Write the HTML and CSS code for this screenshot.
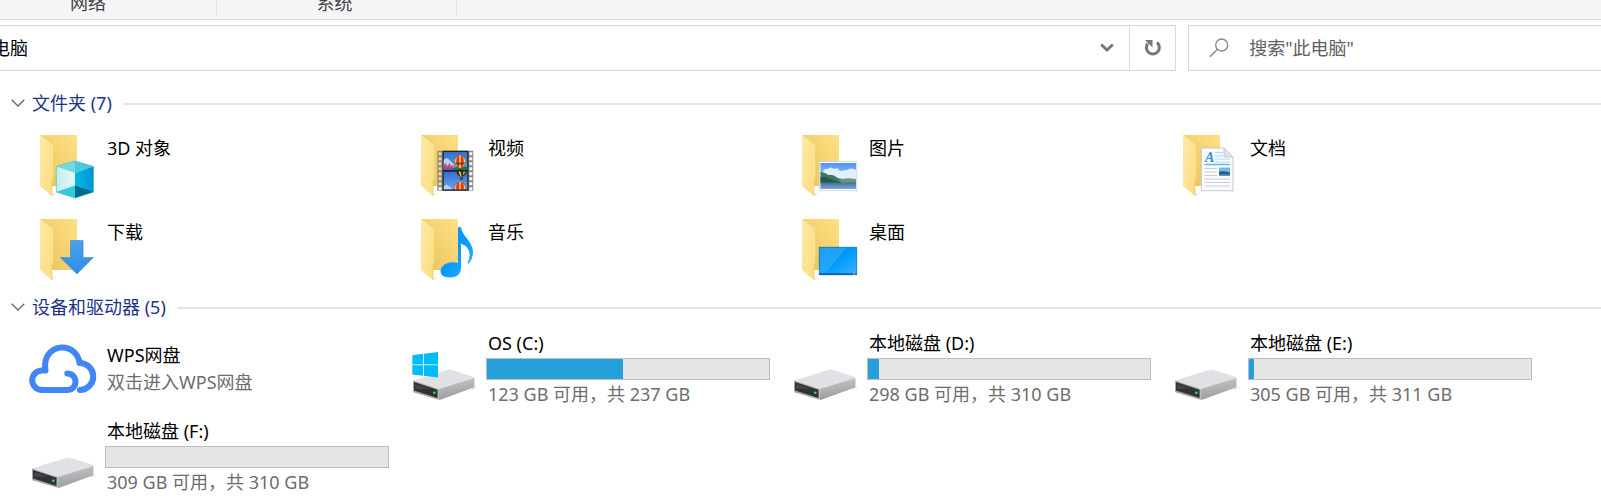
FILE: index.html
```html
<!DOCTYPE html>
<html lang="zh-CN">
<head>
<meta charset="utf-8">
<meta name="viewport" content="width=device-width, initial-scale=1">
<title>此电脑</title>
<link rel="stylesheet" href="styles.css">
</head>
<body>
<svg class="defs" aria-hidden="true">
  <defs>
    <linearGradient id="g-back" x1="0" x2="1" y1="1" y2="0"><stop offset="0" stop-color="#e6c25c"/><stop offset="1" stop-color="#ffe083"/></linearGradient>
    <linearGradient id="g-flap" x1="0" x2="1" y1="0" y2="1"><stop offset="0" stop-color="#ffe9a6"/><stop offset="1" stop-color="#fbdc7c"/></linearGradient>
    <linearGradient id="g-shade"><stop offset="0" stop-color="#9a9a9a" stop-opacity=".3"/><stop offset="1" stop-color="#9a9a9a" stop-opacity="0"/></linearGradient>
    <linearGradient id="g-side" x1="0" x2="0.2" y1="0" y2="1"><stop offset="0" stop-color="#c9cacc"/><stop offset="1" stop-color="#9b9c9e"/></linearGradient>
    <linearGradient id="g-blue" x1="0" x2="1" y1="0" y2="1"><stop offset="0" stop-color="#0090f5"/><stop offset=".5" stop-color="#009bff"/><stop offset="1" stop-color="#3db2ff"/></linearGradient>
    <linearGradient id="g-sky" x1="0" x2="0" y1="0" y2="1"><stop offset="0" stop-color="#4f95f0"/><stop offset="1" stop-color="#d8ecfb"/></linearGradient>
    <linearGradient id="g-lake" x1="0" x2="0" y1="0" y2="1"><stop offset="0" stop-color="#3a6f9e"/><stop offset="1" stop-color="#7fa9c9"/></linearGradient>
    <linearGradient id="g-arrow" x1="0" x2="0" y1="0" y2="1"><stop offset="0" stop-color="#4ba0ea"/><stop offset="1" stop-color="#2b8fe8"/></linearGradient>
    <linearGradient id="g-film" x1="0" x2="0" y1="0" y2="1"><stop offset="0" stop-color="#2f6fd0"/><stop offset="1" stop-color="#6ba4ee"/></linearGradient>
    <linearGradient id="g-cl"><stop offset="0" stop-color="#c3ecec"/><stop offset="1" stop-color="#e6f8fa"/></linearGradient>
    <linearGradient id="g-cr"><stop offset="0" stop-color="#00bddc"/><stop offset="1" stop-color="#0091da"/></linearGradient>
  </defs>
  <symbol id="folder" viewBox="0 0 72 66">
    <path d="M26 60l5-1-5 3zM60 56l10-1-8 4z" fill="url(#g-shade)"/>
    <path d="M14 1h37v51H26z" fill="url(#g-back)"/>
    <path d="M14 1l13.700 10.500V44L26 46v16L14 52z" fill="url(#g-flap)"/>
    <path d="M27.700 11.500V44L26 46v16" fill="none" stroke="#edcb6b" stroke-width=".7"/>
  </symbol>
  <symbol id="drive" viewBox="0 0 72 66">
    <path d="M66 50l6 1-7 3z" fill="url(#g-shade)"/>
    <path d="M6 44.500L40 34q2.500-1 5 0l20.500 6.500q2 .7 2 2L31.500 53z" fill="#e0e1e5"/>
    <path d="M31.500 53l36-11v8q0 1.500-2 2L34 63.500q-1.500.5-2.500.2z" fill="url(#g-side)"/>
    <path d="M6 44.500L31.500 53v10.700L7 56.500q-1-.4-1-1.500z" fill="#a6a7a9"/>
    <path d="M7 46l23.500 7.800v8.200L7 54.500z" fill="#303234"/>
    <path d="M8 48l15 4.500L8 53z" fill="#434547"/>
    <circle cx="27.300" cy="56.700" r="1.300" fill="#2bea3c"/>
  </symbol>
  <symbol id="scene" viewBox="0 0 24 19">
    <rect width="24" height="19" fill="url(#g-film)"/>
    <path d="M0 8l3-2 3 2 4 4 1 5H0z" fill="#bcd2f5"/>
    <path d="M0 13l2-2 2 3 2-3 2 3 2-1v6H0z" fill="#d44a7c"/>
    <path d="M0 15l3 1 3-1 3 2v2H0z" fill="#7058b8"/>
    <path d="M9 16q7-3 15-1v4H9z" fill="#167a50"/>
    <path d="M11 9a5.500 5.500 0 0 1 11 0q0 3-4 7h-3q-4-4-4-7z" fill="#e8352c"/>
    <path d="M13.500 4.800q-2 5 1 11l-2.500-3.800q-2-4 1.500-7.200zM19.500 4.800q2 5-1 11l2.500-3.800q2-4-1.500-7.200zM15.700 3.500h1.600V16h-1.600z" fill="#f7d730"/>
    <path d="M11.500 10.500h10l-1 2h-8z" fill="#352b2b" opacity=".65"/>
    <path d="M15 17h3v2h-3z" fill="#5d3420"/>
  </symbol>
  <symbol id="chevron" viewBox="0 0 14 8"><path d="M.7.700L7 7l6.300-6.300" fill="none" stroke="#666" stroke-width="1.300"/></symbol>
</svg>

<header class="ribbon">
  <span class="ribbon-group">网络</span>
  <span class="ribbon-group">系统</span>
</header>

<div class="toolbar">
  <div class="address">
    <input class="address-input" type="text" value="电脑" aria-label="地址">
    <button class="history" type="button" aria-label="以前的位置">
      <svg width="14" height="10" viewBox="0 0 14 10"><path d="M1.200 1.500L7 7l5.800-5.500" fill="none" stroke="#777" stroke-width="3"/></svg>
    </button>
    <button class="refresh" type="button" aria-label="刷新">
      <svg width="18" height="18" viewBox="0 0 18 18"><path d="M13 3.500A6.500 6.500 0 1 1 3.700 4.500" fill="none" stroke="#777" stroke-width="3"/><path d="M1 1h7.500v7.500z" fill="#777"/></svg>
    </button>
  </div>
  <label class="search">
    <svg width="20" height="20" viewBox="0 0 20 20"><circle cx="12.700" cy="7" r="6" fill="none" stroke="#888" stroke-width="1.300"/><path d="M8.400 11.300L1 18.700" stroke="#888" stroke-width="1.400"/></svg>
    <input class="search-input" type="text" placeholder='搜索"此电脑"' aria-label="搜索">
  </label>
</div>

<main class="content">
  <section>
    <h2 class="group-title"><button type="button"><svg width="14" height="8"><use href="#chevron"/></svg>文件夹 (7)</button></h2>
    <div class="tiles folders">
      <a class="tile" href="#objects">
        <svg class="icon" viewBox="0 0 72 66"><use href="#folder"/>
          <path d="M30.300 32.500L49 27l18.500 5.500L49 39z" fill="#6fd8e9"/><path d="M49 27l18.500 5.500L49 39z" fill="#4cc7de"/>
          <path d="M30.300 32.500L49 39v25l-18.700-6z" fill="url(#g-cl)"/><path d="M67.500 32.500L49 39v25l18.500-6z" fill="url(#g-cr)"/>
          <path d="M30.300 58L49 51.500V64z" fill="#2fcbdd"/><path d="M67.500 58L49 51.500V64z" fill="#00698c"/>
          <path d="M30.300 32.500L49 27l18.500 5.500V58L49 64l-18.700-6z" fill="none" stroke="#35b5cd" stroke-width=".6"/></svg>
        <span class="name">3D 对象</span>
      </a>
      <a class="tile" href="#videos">
        <svg class="icon" viewBox="0 0 72 66"><use href="#folder"/>
          <path d="M30.300 16.700h36v40h-36z" fill="#888"/><path d="M35.500 16.700h26v40h-26z" fill="#222"/>
          <path d="M33 18.200v33" stroke="#f0d88e" stroke-width="3" stroke-dasharray="3 2"/><path d="M33 53.200v3M63.800 18.200v38" stroke="#f6f6f6" stroke-width="3" stroke-dasharray="3 2"/>
          <svg x="36.500" y="18" width="24" height="18" viewBox="0 0 24 18"><use href="#scene" width="24" height="19"/></svg>
          <svg x="36.500" y="37.500" width="24" height="18" viewBox="0 0 24 18"><path d="M0 0h24v18H0z" fill="url(#g-film)"/><path d="M13 0h10q0 3-3.500 5h-3Q13 3 13 0z" fill="#3d2831"/><path d="M15 0h2l1 5h-1zM20 0h2l-2.500 4z" fill="#f7d730"/><path d="M16.500 6h3v2h-3z" fill="#4e3226"/><svg y="8" width="24" height="10" viewBox="0 1 24 10"><path d="M0 8l3-2 3 2 4 4H0z" fill="#bcd2f5"/><path d="M11 9a5.500 5.500 0 0 1 11 0v3H11z" fill="#e8352c"/><path d="M13.500 4.800q-1.500 3-.5 7h-1q-2-4 1.500-7zM19.500 4.800q1.500 3 .5 7h1q2-4-1.500-7zM15.700 3.500h1.600V12h-1.600z" fill="#f7d730"/></svg></svg></svg>
        <span class="name">视频</span>
      </a>
      <a class="tile" href="#pictures">
        <svg class="icon" viewBox="0 0 72 66"><use href="#folder"/>
          <path d="M31.300 27.500h37.500v29.200H31.300z" fill="#fff" stroke="#c9ced2" stroke-width=".8"/>
          <path d="M32.500 29H68v26H32.500z" fill="url(#g-sky)"/>
          <path d="M35 38q1-4 5-3 3-3 6 0 4-2 6 2l7-1q4-3 9 0v9H35z" fill="#f2f8fd" opacity=".85"/>
          <path d="M32.500 38q4 0 8 3 5-1 9 3 8 1 18.500 5H32.500z" fill="#3d7a5c"/><path d="M32.500 43q6-1 12 3l10 3h-22z" fill="#295947"/><path d="M50 46q8-3 18-1v4H54z" fill="#659a80"/>
          <path d="M32.500 48.500H68V55H32.500z" fill="url(#g-lake)"/></svg>
        <span class="name">图片</span>
      </a>
      <a class="tile" href="#documents">
        <svg class="icon" viewBox="0 0 72 66"><use href="#folder"/>
          <path d="M32.300 14H55l9 9v33.700H32.300z" fill="#fafbfc" stroke="#b9bdc1" stroke-width=".8"/>
          <path d="M55 14v9h9z" fill="#e3e5e8" stroke="#b9bdc1" stroke-width=".7"/>
          <text class="doc-letter" x="36" y="28">A</text>
          <path d="M46 18.500h8M46 22h8M46 25h15M46 28h15" stroke="#9ed0f2" stroke-width=".8"/>
          <path d="M35.500 30.500h25.500" stroke="#66b4e8" stroke-width="1.500"/>
          <path d="M35.500 34.500H48M35.500 38H48M35.500 41.500H48M35.500 45H61M35.500 48.500H61M35.500 52H61" stroke="#bfc3c6" stroke-width=".8"/>
          <path d="M50 33.500h11v8H50z" fill="#6bbcf5"/><path d="M50 37.500q5-1 11 1v3H50z" fill="#2d6272"/><path d="M50 40.500h11v1.200H50z" fill="#5294c6"/></svg>
        <span class="name">文档</span>
      </a>
      <a class="tile" href="#downloads">
        <svg class="icon" viewBox="0 0 72 66"><use href="#folder"/>
          <path d="M44.500 22.500h12.600v17h10.200L51 56 34.300 39.500h10.200z" fill="url(#g-arrow)" stroke="#2b7fc8" stroke-width=".5"/></svg>
        <span class="name">下载</span>
      </a>
      <a class="tile" href="#music">
        <svg class="icon" viewBox="0 0 72 66"><use href="#folder"/>
          <path d="M51 9.500q1.500-1 3 0 .5 4.500 5.500 10.500 6.500 7.500 6.500 14.500 0 6-4 10.800-.8.500-1.500 0Q67 31 54 25.500v24q0 10-11.500 10-9-.5-9-6.500 1-7.500 11-8.700 3.500-.2 6.500.7z" fill="url(#g-blue)"/></svg>
        <span class="name">音乐</span>
      </a>
      <a class="tile" href="#desktop">
        <svg class="icon" viewBox="0 0 72 66"><use href="#folder"/>
          <path d="M31.300 29.300h37.400v27.400H31.300z" fill="url(#g-blue)" stroke="#0871b8" stroke-width=".8"/>
          <path d="M32 30h26L37 56h-5z" fill="#fff" opacity=".12"/><path d="M31.300 56h37.400" stroke="#075f9d" stroke-width="1.300"/><path d="M65.500 56h1.500" stroke="#fff" stroke-width=".8"/></svg>
        <span class="name">桌面</span>
      </a>
    </div>
  </section>

  <section>
    <h2 class="group-title"><button type="button"><svg width="14" height="8"><use href="#chevron"/></svg>设备和驱动器 (5)</button></h2>
    <div class="tiles drives">
      <a class="tile" href="#wps">
        <svg class="icon" viewBox="0 0 72 66"><path d="M41.300 37.500a8.250 8.250 0 0 1 0 16.500H16a9.750 9.750 0 0 1 0-19.500h3.500q-.7-2.500-.3-6.500a17.200 17.200 0 0 1 34.300-1A13.500 13.500 0 0 1 54 54" fill="none" stroke="#4285f4" stroke-width="6" stroke-linecap="round" stroke-linejoin="round"/></svg>
        <span class="details"><span class="name">WPS网盘</span><span class="note">双击进入WPS网盘</span></span>
      </a>
      <a class="tile" href="#c">
        <svg class="icon" viewBox="0 0 72 66"><use href="#drive"/><path d="M5.300 19.300l10.900-1.500v10.600H5.300zM17 17.700L31 16v12.400H17zM5.300 29.200h10.900v10.600L5.300 38.500zM17 29.200h14v12.200l-14-1.600z" fill="#00bdf6"/></svg>
        <span class="details"><span class="name">OS (C:)</span><progress max="237" value="114" aria-label="OS (C:) 已用空间"></progress><span class="note">123 GB 可用，共 237 GB</span></span>
      </a>
      <a class="tile" href="#d">
        <svg class="icon" viewBox="0 0 72 66"><use href="#drive"/></svg>
        <span class="details"><span class="name">本地磁盘 (D:)</span><progress max="310" value="12" aria-label="本地磁盘 (D:) 已用空间"></progress><span class="note">298 GB 可用，共 310 GB</span></span>
      </a>
      <a class="tile" href="#e">
        <svg class="icon" viewBox="0 0 72 66"><use href="#drive"/></svg>
        <span class="details"><span class="name">本地磁盘 (E:)</span><progress max="311" value="6" aria-label="本地磁盘 (E:) 已用空间"></progress><span class="note">305 GB 可用，共 311 GB</span></span>
      </a>
      <a class="tile" href="#f">
        <svg class="icon" viewBox="0 0 72 66"><use href="#drive"/></svg>
        <span class="details"><span class="name">本地磁盘 (F:)</span><progress max="310" value="0" aria-label="本地磁盘 (F:) 已用空间"></progress><span class="note">309 GB 可用，共 310 GB</span></span>
      </a>
    </div>
  </section>
</main>
</body>
</html>
```
FILE: styles.css
```css
* {
  box-sizing: border-box;
}

body {
  margin: 0;
  background: #fff;
  color: #000;
  font: 18px/26px "Noto Sans", "Noto Sans CJK SC", sans-serif;
  overflow-x: hidden;
}

button,
input {
  font: inherit;
  color: inherit;
  background: none;
  border: 0;
  padding: 0;
  outline: 0;
}

.defs {
  position: absolute;
  width: 0;
  height: 0;
}

/* Ribbon */
.ribbon {
  display: flex;
  height: 20px;
  overflow: hidden;
  background: #f4f5f7;
  border-bottom: 1px solid #d6d8da;
  color: #444;
}

.ribbon-group {
  display: flex;
  align-items: flex-end;
  justify-content: center;
  width: 240px;
  height: 16px;
  padding-right: 4px;
  line-height: 26px;
  border-right: 1px solid #dfe1e4;
}

.ribbon-group:first-child {
  width: 257px;
  margin-left: -40px;
  padding-right: 0;
}

/* Address and search */
.toolbar {
  display: flex;
  gap: 12px;
  padding-top: 5px;
}

.address,
.search {
  display: flex;
  align-items: center;
  height: 46px;
  border: 1px solid #d9d9d9;
  min-width: 0;
}

.address {
  flex: 3 1 0;
  border-left: 0;
}

.address-input {
  flex: 1;
  min-width: 0;
  margin-left: -8px;
}

.history,
.refresh {
  display: flex;
  align-items: center;
  justify-content: center;
  width: 44px;
  height: 44px;
}

.refresh {
  width: 46px;
  border-left: 1px solid #d9d9d9;
}

.search {
  flex: 1 1 0;
  gap: 20px;
  padding-left: 20px;
  border-right: 0;
}

.search-input {
  flex: 1;
  min-width: 0;
}

.search-input::placeholder {
  color: #606060;
  opacity: 1;
}

/* Groups */
.content {
  padding: 19px 0 6px;
}

.group-title {
  display: flex;
  align-items: center;
  gap: 11px;
  margin: 0;
  padding-left: 11px;
  font: inherit;
  color: #1e3287;
}

.group-title button {
  display: flex;
  align-items: center;
  gap: 7px;
  padding-bottom: 2px;
}

.group-title::after {
  content: "";
  flex: 1;
  height: 2px;
  background: #e5e5e5;
}

.tiles {
  display: grid;
  grid-template-columns: repeat(auto-fill, 363px);
  column-gap: 18px;
  padding-left: 26px;
}

.folders {
  row-gap: 18px;
  padding-top: 16px;
  padding-bottom: 10px;
}

.drives {
  row-gap: 10px;
  padding-top: 8px;
}

.tile {
  display: flex;
  gap: 7px;
  color: inherit;
  text-decoration: none;
}

.icon {
  flex: none;
  width: 72px;
  height: 66px;
}

.name,
.note {
  padding-left: 2px;
}

.folders .name {
  padding-top: 1px;
}

.drives .tile {
  align-items: center;
  height: 78px;
}

.details {
  display: flex;
  flex-direction: column;
  flex: 1;
  line-height: 27px;
}

.note {
  color: #6d6d6d;
}

progress {
  appearance: none;
  display: block;
  width: 100%;
  height: 22px;
  margin: 1px 0;
  border: 1px solid #bcbcbc;
  background: #e6e6e6;
}

progress::-webkit-progress-bar {
  background: #e6e6e6;
}

progress::-webkit-progress-value {
  background: #26a0da;
}

.doc-letter {
  font: italic 700 14px "Liberation Serif", serif;
  fill: #2b8fd8;
}
```
